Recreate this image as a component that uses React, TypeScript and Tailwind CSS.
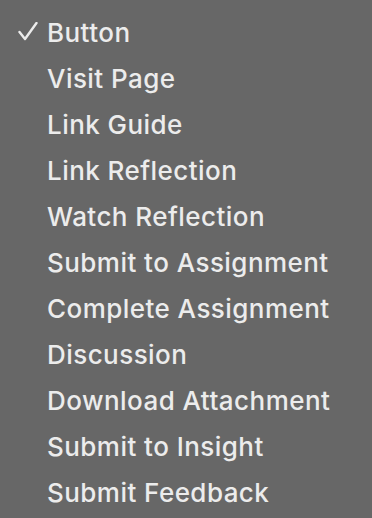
const items = [
  "Button",
  "Visit Page",
  "Link Guide",
  "Link Reflection",
  "Watch Reflection",
  "Submit to Assignment",
  "Complete Assignment",
  "Discussion",
  "Download Attachment",
  "Submit to Insight",
  "Submit Feedback",
];

function Check() {
  return (
    <svg width="20" height="22" viewBox="0 0 20 22" fill="none" className="block">
      <path d="M1.5 10 L7 17 L18.5 1" stroke="#ececec" strokeWidth="2.4" strokeLinecap="round" strokeLinejoin="round" />
    </svg>
  );
}

export default function App() {
  return (
    <div className="h-[518px] w-[372px] overflow-hidden bg-[#676767] pt-[10px] font-['Inter',sans-serif] text-[#ececec]">
      <ul>
        {items.map((item, i) => (
          <li key={item} className="flex h-[46px] items-center pl-[18px] text-[26px] font-medium leading-none tracking-[0.45px]">
            <span className="flex w-[29px] items-center">{i === 0 ? <Check /> : null}</span>
            <span>{item}</span>
          </li>
        ))}
      </ul>
    </div>
  );
}
